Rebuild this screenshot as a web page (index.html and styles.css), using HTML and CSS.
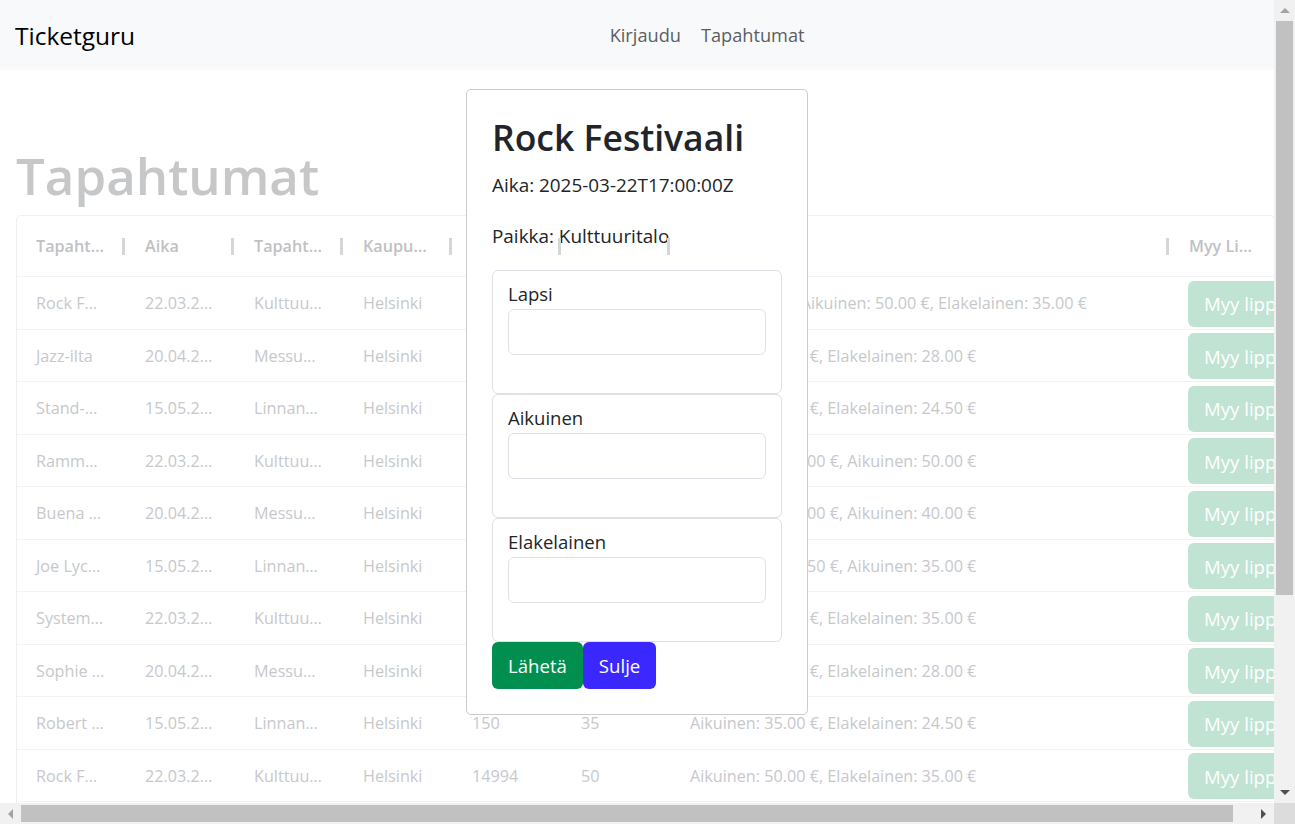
FILE: index.html
```html
<!DOCTYPE html>
<html lang="fi">
<head>
<meta charset="utf-8">
<title>Ticketguru</title>
<link rel="stylesheet" href="styles.css">
</head>
<body>
<nav class="navbar">
  <a class="brand" href="#">Ticketguru</a>
  <ul class="nav">
    <li><a href="#">Kirjaudu</a></li>
    <li><a href="#">Tapahtumat</a></li>
  </ul>
</nav>
<main class="page">
  <h1 class="title">Tapahtumat</h1>
  <div class="grid">
    <div class="row head">
      <div class="cell hcell c1"><span class="htext">Tapahtuma</span><span class="sep"></span></div>
      <div class="cell hcell"><span class="htext">Aika</span><span class="sep"></span></div>
      <div class="cell hcell"><span class="htext">Tapahtumapaikka</span><span class="sep"></span></div>
      <div class="cell hcell"><span class="htext">Kaupunki</span><span class="sep"></span></div>
      <div class="cell hcell"><span class="htext">Lippuja</span><span class="sep"></span></div>
      <div class="cell hcell"><span class="htext">Myyty</span><span class="sep"></span></div>
      <div class="cell hcell c7"><span class="htext">Hinnat</span><span class="sep"></span></div>
      <div class="cell hcell c8"><span class="htext">Myy Lippuja</span></div>
    </div>
    <div class="row"><div class="cell c1">Rock Festivaali</div><div class="cell">22.03.2025 17:00</div><div class="cell c3">Kulttuuritalo</div><div class="cell">Helsinki</div><div class="cell">15000</div><div class="cell">50</div><div class="cell c7">Lapsi: 25.00 €, Aikuinen: 50.00 €, Elakelainen: 35.00 €</div><div class="cell c8"><button class="sell">Myy lippuja</button></div></div>
    <div class="row"><div class="cell c1">Jazz-ilta</div><div class="cell">20.04.2025 19:00</div><div class="cell c3">Messukeskus</div><div class="cell">Helsinki</div><div class="cell">500</div><div class="cell">40</div><div class="cell c7">Aikuinen: 40.00 €, Elakelainen: 28.00 €</div><div class="cell c8"><button class="sell">Myy lippuja</button></div></div>
    <div class="row"><div class="cell c1">Stand-up ilta</div><div class="cell">15.05.2025 20:00</div><div class="cell c3">Linnanmäki</div><div class="cell">Helsinki</div><div class="cell">150</div><div class="cell">35</div><div class="cell c7">Aikuinen: 35.00 €, Elakelainen: 24.50 €</div><div class="cell c8"><button class="sell">Myy lippuja</button></div></div>
    <div class="row"><div class="cell c1">Rammstein</div><div class="cell">22.03.2025 17:00</div><div class="cell c3">Kulttuuritalo</div><div class="cell">Helsinki</div><div class="cell">15000</div><div class="cell">50</div><div class="cell c7">Elakelainen: 35.00 €, Aikuinen: 50.00 €</div><div class="cell c8"><button class="sell">Myy lippuja</button></div></div>
    <div class="row"><div class="cell c1">Buena Vista Social Club</div><div class="cell">20.04.2025 19:00</div><div class="cell c3">Messukeskus</div><div class="cell">Helsinki</div><div class="cell">500</div><div class="cell">40</div><div class="cell c7">Elakelainen: 28.00 €, Aikuinen: 40.00 €</div><div class="cell c8"><button class="sell">Myy lippuja</button></div></div>
    <div class="row"><div class="cell c1">Joe Lycett</div><div class="cell">15.05.2025 20:00</div><div class="cell c3">Linnanmäki</div><div class="cell">Helsinki</div><div class="cell">150</div><div class="cell">35</div><div class="cell c7">Elakelainen: 24.50 €, Aikuinen: 35.00 €</div><div class="cell c8"><button class="sell">Myy lippuja</button></div></div>
    <div class="row"><div class="cell c1">System of a Down</div><div class="cell">22.03.2025 17:00</div><div class="cell c3">Kulttuuritalo</div><div class="cell">Helsinki</div><div class="cell">15000</div><div class="cell">50</div><div class="cell c7">Aikuinen: 50.00 €, Elakelainen: 35.00 €</div><div class="cell c8"><button class="sell">Myy lippuja</button></div></div>
    <div class="row"><div class="cell c1">Sophie Ellis-Bextor</div><div class="cell">20.04.2025 19:00</div><div class="cell c3">Messukeskus</div><div class="cell">Helsinki</div><div class="cell">500</div><div class="cell">40</div><div class="cell c7">Aikuinen: 40.00 €, Elakelainen: 28.00 €</div><div class="cell c8"><button class="sell">Myy lippuja</button></div></div>
    <div class="row"><div class="cell c1">Robert Plant</div><div class="cell">15.05.2025 20:00</div><div class="cell c3">Linnanmäki</div><div class="cell">Helsinki</div><div class="cell">150</div><div class="cell">35</div><div class="cell c7">Aikuinen: 35.00 €, Elakelainen: 24.50 €</div><div class="cell c8"><button class="sell">Myy lippuja</button></div></div>
    <div class="row"><div class="cell c1">Rock Festivaali</div><div class="cell">22.03.2025 17:00</div><div class="cell c3">Kulttuuritalo</div><div class="cell">Helsinki</div><div class="cell">14994</div><div class="cell">50</div><div class="cell c7">Aikuinen: 50.00 €, Elakelainen: 35.00 €</div><div class="cell c8"><button class="sell">Myy lippuja</button></div></div>
    <div class="row"><div class="cell c1">Jazz-ilta</div><div class="cell">20.04.2025 19:00</div><div class="cell c3">Messukeskus</div><div class="cell">Helsinki</div><div class="cell">500</div><div class="cell">40</div><div class="cell c7">Aikuinen: 40.00 €, Elakelainen: 28.00 €</div><div class="cell c8"><button class="sell">Myy lippuja</button></div></div>
    <div class="row"><div class="cell c1">Stand-up ilta</div><div class="cell">15.05.2025 20:00</div><div class="cell c3">Linnanmäki</div><div class="cell">Helsinki</div><div class="cell">150</div><div class="cell">35</div><div class="cell c7">Aikuinen: 35.00 €, Elakelainen: 24.50 €</div><div class="cell c8"><button class="sell">Myy lippuja</button></div></div>
    <div class="grid-footer">Rivejä sivulla: 100 &nbsp;&nbsp; 1–12 / 12</div>
  </div>

  <div class="modal">
    <h2 class="modal-title">Rock Festivaali</h2>
    <p class="info">Aika: 2025-03-22T17:00:00Z</p>
    <p class="info">Paikka: Kulttuuritalo</p>
    <form class="ticket-form">
      <div class="field"><label for="lapsi">Lapsi</label><input id="lapsi" type="text"></div>
      <div class="field"><label for="aikuinen">Aikuinen</label><input id="aikuinen" type="text"></div>
      <div class="field"><label for="elakelainen">Elakelainen</label><input id="elakelainen" type="text"></div>
      <div class="actions"><button type="button" class="btn btn-send">Lähetä</button><button type="button" class="btn btn-close">Sulje</button></div>
    </form>
  </div>
</main>

<div class="vscroll" aria-hidden="true"><span class="arrow arrow-up"></span><span class="thumb"></span><span class="arrow arrow-down"></span></div>
<div class="hscroll" aria-hidden="true"><span class="arrow arrow-left"></span><span class="thumb"></span><span class="arrow arrow-right"></span></div>
<div class="scroll-corner" aria-hidden="true"></div>
</body>
</html>
```

FILE: styles.css
```css
html { overflow: hidden; }
html, body { margin: 0; }
body {
  font-family: "Open Sans", "Noto Sans", sans-serif;
  color: #212529;
}

/* navbar */
.navbar {
  height: 70px;
  background: #f8f9fa;
  display: flex;
  align-items: center;
  padding: 0 36px 0 15px;
}
.brand {
  font-size: 24.5px;
  color: #000;
  text-decoration: none;
  margin-right: 20px;
}
.nav {
  flex: 1;
  display: flex;
  justify-content: center;
  list-style: none;
  margin: 0;
  padding: 0;
}
.nav a {
  display: block;
  padding: 0 10px;
  font-size: 18.2px;
  color: #5b5e63;
  text-decoration: none;
}

/* page */
.page {
  position: relative;
  padding: 0 16px 20px;
}
.title {
  margin: 0 0 4px;
  padding-top: 69px;
  font-size: 51px;
  line-height: 72px;
  font-weight: 600;
  color: #c6c7c9;
}

/* data grid */
.grid {
  width: 1259px;
  box-sizing: border-box;
  border: 1px solid #f0f0f0;
  border-radius: 5px;
}
.row {
  display: flex;
  height: 52.5px;
  box-sizing: border-box;
  border-bottom: 1px solid #f3f3f3;
}
.row.head { height: 61px; }
.cell {
  flex: none;
  width: 109px;
  box-sizing: border-box;
  padding: 0 16px 0 22px;
  overflow: hidden;
  white-space: nowrap;
  text-overflow: ellipsis;
  font-size: 16.2px;
  line-height: 52px;
  color: #c7c8cc;
}
.c1 { width: 106px; padding-left: 19px; padding-right: 18px; }
.c3 { padding-right: 19px; }
.c7 { width: 499px; }
.c8 {
  width: 107px;
  display: flex;
  align-items: center;
  overflow: visible;
  padding-left: 21px;
  padding-right: 0;
}
.hcell {
  position: relative;
  overflow: visible;
  line-height: 60px;
  font-weight: 600;
  color: #c0c1c4;
}
.hcell.c8 { display: block; padding-left: 22px; padding-right: 16px; }
.htext {
  display: block;
  overflow: hidden;
  text-overflow: ellipsis;
  white-space: nowrap;
}
.sep {
  position: absolute;
  right: -2px;
  top: 50%;
  width: 3px;
  height: 17px;
  margin-top: -8px;
  background: #d6d6d6;
  z-index: 5;
}
.sell {
  flex: none;
  height: 46px;
  margin-top: 2px;
  padding: 0 16px;
  border: none;
  border-radius: 6px;
  background: #c0e3d4;
  color: #fff;
  font-family: inherit;
  font-size: 18.6px;
}
.grid-footer {
  height: 58px;
  line-height: 58px;
  padding: 0 20px;
  text-align: right;
  font-size: 16px;
  color: #d0d0d0;
}

/* modal */
.modal {
  position: absolute;
  left: 466px;
  top: 19px;
  width: 342px;
  box-sizing: border-box;
  padding: 23px 25px 25px;
  background: #fff;
  border: 1px solid #cbcbcb;
  border-radius: 5px;
  z-index: 3;
}
.modal-title {
  margin: 0 0 9px;
  font-size: 35.5px;
  line-height: 48px;
  font-weight: 600;
}
.info {
  margin: 0 0 21px;
  font-size: 18.9px;
  line-height: 30px;
}
.info + .info { margin-bottom: 19px; }
.ticket-form { margin: 0; }
.field {
  border: 1px solid #dee2e6;
  border-radius: 6px;
  padding: 8px 15px 38px;
}
.field label {
  display: block;
  font-size: 18.5px;
  line-height: 30px;
}
.field input {
  display: block;
  width: 100%;
  height: 46px;
  box-sizing: border-box;
  border: 1px solid #dee2e6;
  border-radius: 6px;
  margin: 0;
}
.actions { display: flex; }
.btn {
  height: 47px;
  padding: 0 16px;
  border: none;
  border-radius: 6px;
  color: #fff;
  font-family: inherit;
  font-size: 18.6px;
}
.btn-send { background: #008f4f; }
.btn-close { background: #3a28ff; }

/* window scrollbars (part of the captured frame) */
.vscroll {
  position: fixed;
  top: 0;
  right: 0;
  width: 21px;
  height: 803px;
  background: #f1f1f1;
  display: flex;
  flex-direction: column;
  z-index: 50;
}
.vscroll .thumb {
  height: 574px;
  margin: 0 2px;
  background: #c1c1c1;
}
.hscroll {
  position: fixed;
  left: 0;
  bottom: 0;
  width: 1274px;
  height: 21px;
  background: #f1f1f1;
  display: flex;
  z-index: 50;
}
.hscroll .thumb {
  width: 1212px;
  margin: 2px 0;
  background: #c1c1c1;
}
.scroll-corner {
  position: fixed;
  right: 0;
  bottom: 0;
  width: 21px;
  height: 21px;
  background: #dcdcdc;
  z-index: 50;
}
.arrow {
  flex: none;
  width: 21px;
  height: 21px;
  display: flex;
  align-items: center;
  justify-content: center;
}
.arrow::before {
  content: "";
  width: 0;
  height: 0;
  border-style: solid;
  border-color: transparent;
}
.arrow-up::before { border-width: 0 5px 5px; border-bottom-color: #a3a3a3; }
.arrow-down { margin-top: auto; }
.arrow-down::before { border-width: 5px 5px 0; border-top-color: #505050; }
.arrow-left::before { border-width: 5px 5px 5px 0; border-right-color: #a3a3a3; }
.arrow-right { margin-left: auto; }
.arrow-right::before { border-width: 5px 0 5px 5px; border-left-color: #505050; }
```
